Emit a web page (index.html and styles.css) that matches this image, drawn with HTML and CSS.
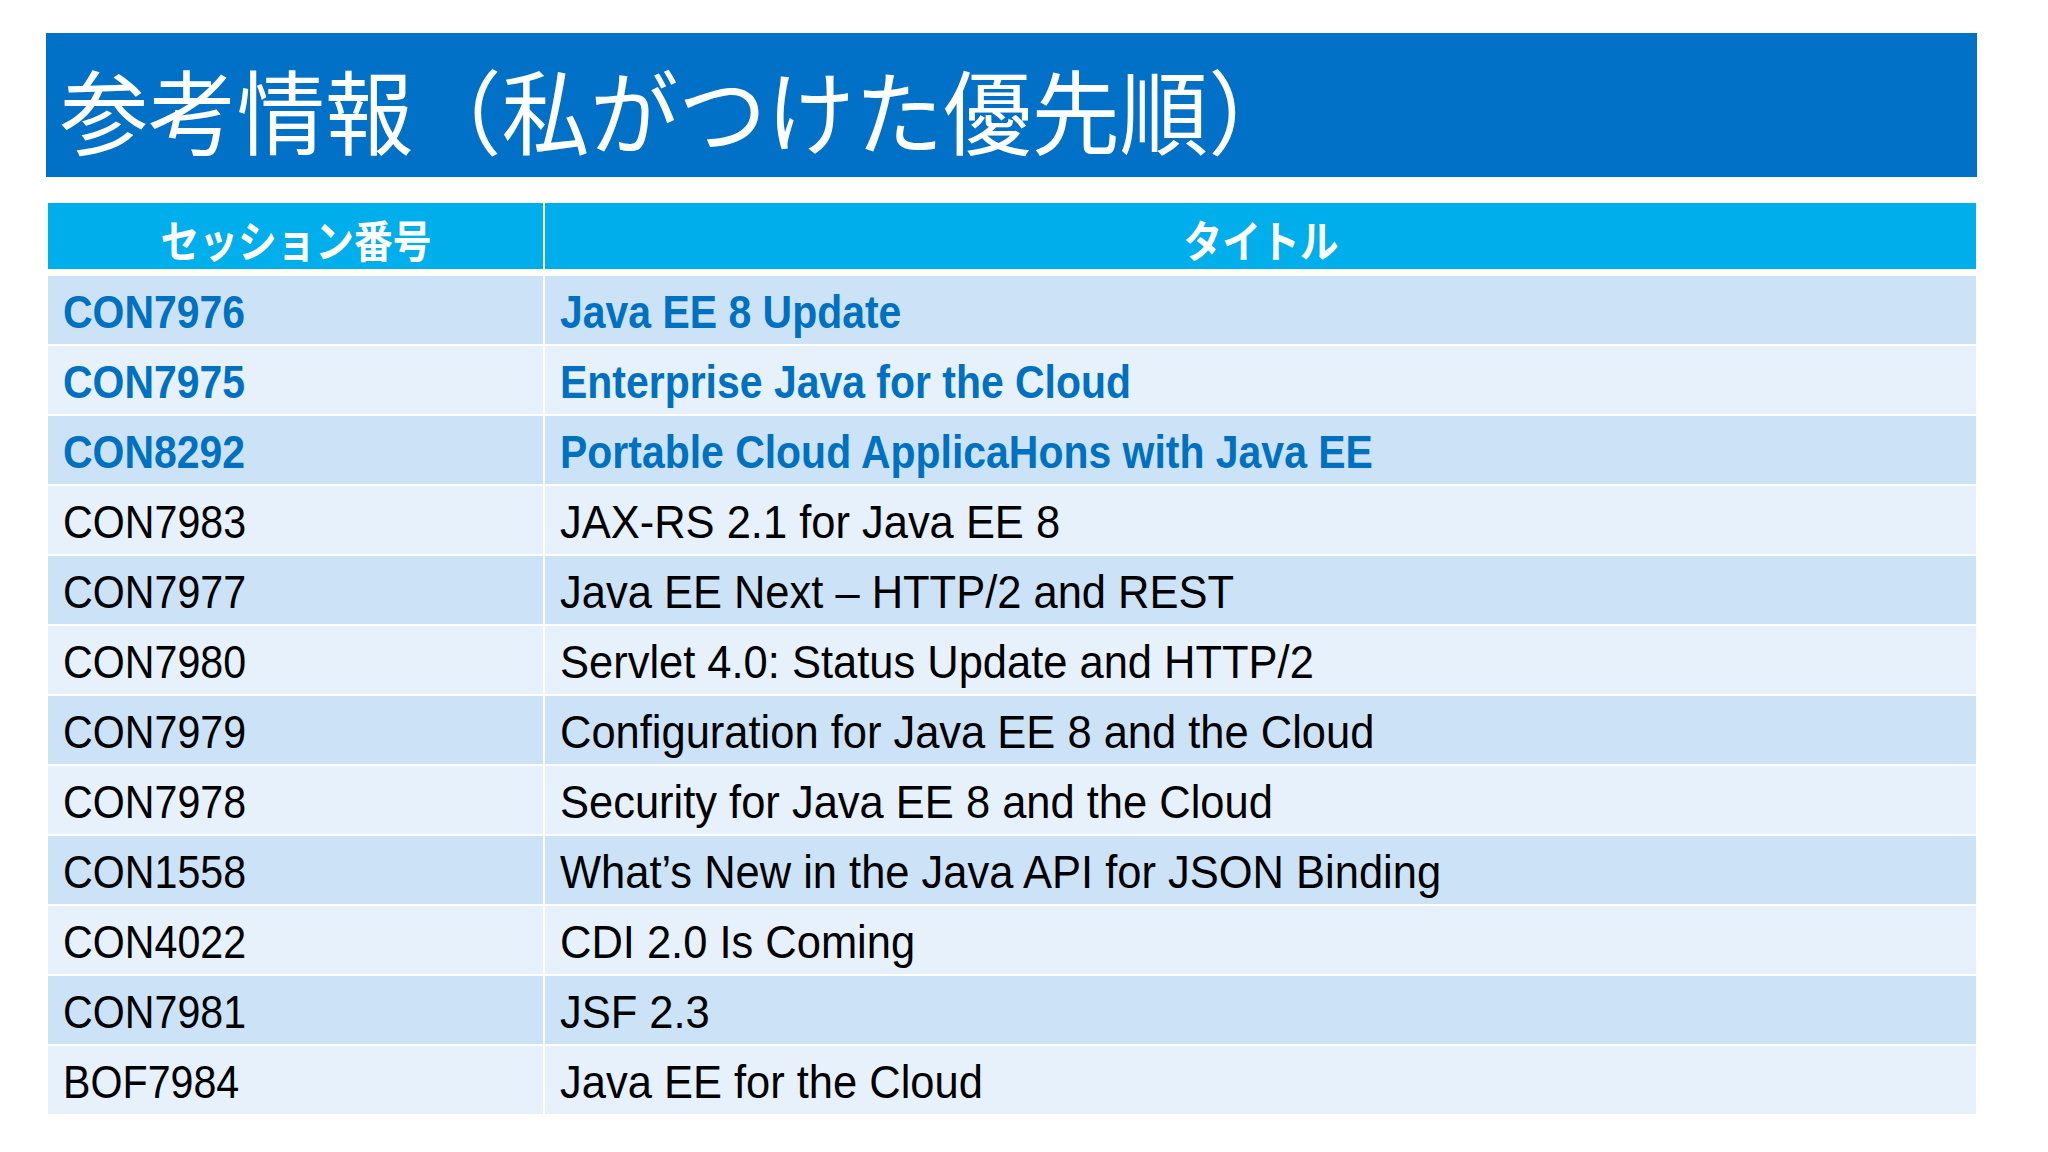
FILE: index.html
```html
<!DOCTYPE html>
<html lang="ja">
<head>
<meta charset="utf-8">
<title>参考情報</title>
<link rel="stylesheet" href="styles.css">
</head>
<body>
<div class="slide">
  <div class="titlebar"><h1 class="title"><span class="tt">参考情報（私がつけた優先順）</span></h1></div>
  <div class="table">
    <div class="row head">
      <div class="cell c1"><span class="ht">セッション番号</span></div>
      <div class="cell c2"><span class="ht">タイトル</span></div>
    </div>
    <div class="row dark blue">
      <div class="cell c1"><span class="t">CON7976</span></div>
      <div class="cell c2"><span class="t">Java EE 8 Update</span></div>
    </div>
    <div class="row light blue">
      <div class="cell c1"><span class="t">CON7975</span></div>
      <div class="cell c2"><span class="t">Enterprise Java for the Cloud</span></div>
    </div>
    <div class="row dark blue">
      <div class="cell c1"><span class="t">CON8292</span></div>
      <div class="cell c2"><span class="t">Portable Cloud ApplicaHons with Java EE</span></div>
    </div>
    <div class="row light">
      <div class="cell c1"><span class="t">CON7983</span></div>
      <div class="cell c2"><span class="t">JAX-RS 2.1 for Java EE 8</span></div>
    </div>
    <div class="row dark">
      <div class="cell c1"><span class="t">CON7977</span></div>
      <div class="cell c2"><span class="t">Java EE Next – HTTP/2 and REST</span></div>
    </div>
    <div class="row light">
      <div class="cell c1"><span class="t">CON7980</span></div>
      <div class="cell c2"><span class="t">Servlet 4.0: Status Update and HTTP/2</span></div>
    </div>
    <div class="row dark">
      <div class="cell c1"><span class="t">CON7979</span></div>
      <div class="cell c2"><span class="t">Configuration for Java EE 8 and the Cloud</span></div>
    </div>
    <div class="row light">
      <div class="cell c1"><span class="t">CON7978</span></div>
      <div class="cell c2"><span class="t">Security for Java EE 8 and the Cloud</span></div>
    </div>
    <div class="row dark">
      <div class="cell c1"><span class="t">CON1558</span></div>
      <div class="cell c2"><span class="t">What’s New in the Java API for JSON Binding</span></div>
    </div>
    <div class="row light">
      <div class="cell c1"><span class="t">CON4022</span></div>
      <div class="cell c2"><span class="t">CDI 2.0 Is Coming</span></div>
    </div>
    <div class="row dark">
      <div class="cell c1"><span class="t">CON7981</span></div>
      <div class="cell c2"><span class="t">JSF 2.3</span></div>
    </div>
    <div class="row light">
      <div class="cell c1"><span class="t">BOF7984</span></div>
      <div class="cell c2"><span class="t">Java EE for the Cloud</span></div>
    </div>
  </div>
</div>
</body>
</html>
```

FILE: styles.css
```css
html, body {
  margin: 0;
  padding: 0;
  background: #ffffff;
}

.slide {
  width: 2048px;
  height: 1152px;
  box-sizing: border-box;
  padding: 33px 0 0 46px;
  background: #ffffff;
  overflow: hidden;
}

.titlebar {
  width: 1931px;
  height: 144px;
  box-sizing: border-box;
  background: #0071c6;
  display: flex;
  align-items: center;
  padding: 6px 0 0 14px;
}

.title {
  margin: 0;
  font-family: "Noto Sans CJK JP", "Noto Sans", sans-serif;
  font-weight: 400;
  font-size: 92px;
  line-height: 1;
  color: #ffffff;
  white-space: nowrap;
}

.tt {
  display: inline-block;
  transform: scaleX(0.96);
  transform-origin: left center;
}

.table {
  margin: 26px 0 0 2px;
  width: 1928px;
  display: flex;
  flex-direction: column;
  gap: 2px;
}

.row {
  display: flex;
  gap: 2px;
  height: 68px;
}

.row.head {
  height: 66px;
  margin-bottom: 5px;
}

.cell {
  box-sizing: border-box;
  display: flex;
  align-items: center;
  font-family: "Liberation Sans", Arial, sans-serif;
  font-size: 46px;
  line-height: 1;
  color: #000000;
  white-space: nowrap;
}

.c1 {
  width: 495px;
  padding-left: 15px;
}

.c2 {
  width: 1431px;
  padding-left: 15px;
}

.head .cell {
  background: #00aeeb;
  justify-content: center;
  padding: 6px 0 0 0;
}

.ht {
  display: inline-block;
  font-family: "Noto Sans CJK JP", "Noto Sans", sans-serif;
  font-weight: 700;
  font-size: 44px;
  color: #ffffff;
  transform: scaleX(0.88);
}

.dark .cell {
  background: #cce3f7;
}

.light .cell {
  background: #e6f1fc;
}

.t {
  display: inline-block;
  transform-origin: left center;
  padding-top: 3px;
}

.c1 .t {
  transform: scaleX(0.895);
}

.c2 .t {
  transform: scaleX(0.945);
}

.blue .cell {
  color: #0070c0;
  font-weight: 700;
}

.blue .c1 .t,
.blue .c2 .t {
  transform: scaleX(0.89);
}
```
